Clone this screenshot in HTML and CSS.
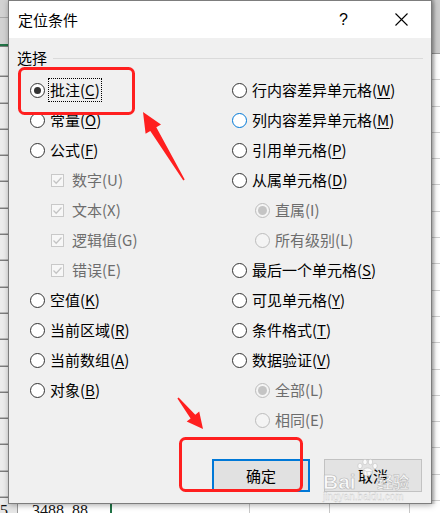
FILE: index.html
```html
<!DOCTYPE html>
<html lang="zh-CN">
<head>
<meta charset="utf-8">
<title>定位条件</title>
<link rel="stylesheet" href="styles.css">
</head>
<body>
<div class="sheet">
  <div class="lstrip"></div>
  <div class="mid"></div>
  <div class="rstrip"></div>
  <div class="bottom-row">
    <span class="cell c0">5</span>
    <span class="cell c1">3488. 88</span>
    <span class="cell c2"></span>
    <span class="cell c3"></span>
    <span class="cell c4"></span>
    <span class="cell c5"></span>
  </div>
</div>

<div class="dialog">
  <div class="titlebar">
    <span class="title">定位条件</span>
    <span class="help">?</span>
    <span class="close"><svg width="13" height="13" viewBox="0 0 13 13"><path d="M0.5 0.5L12.5 12.5M12.5 0.5L0.5 12.5" stroke="#000" stroke-width="1.1" fill="none"/></svg></span>
  </div>
  <div class="body">
    <div class="group-label"><span>选择</span><span class="rule"></span></div>
    <div class="options">
      <div class="col">
        <div class="opt"><span class="radio checked"></span><span class="focus">批注(<u>C</u>)</span></div>
        <div class="opt"><span class="radio"></span><span>常量(<u>O</u>)</span></div>
        <div class="opt"><span class="radio"></span><span>公式(<u>F</u>)</span></div>
        <div class="opt sub dis"><span class="check"><svg width="11" height="11" viewBox="0 0 11 11"><path d="M1.5 5.5L4.2 8.2L9.5 2.5" stroke="#c4c4c4" stroke-width="1.3" fill="none"/></svg></span><span>数字(U)</span></div>
        <div class="opt sub dis"><span class="check"><svg width="11" height="11" viewBox="0 0 11 11"><path d="M1.5 5.5L4.2 8.2L9.5 2.5" stroke="#c4c4c4" stroke-width="1.3" fill="none"/></svg></span><span>文本(X)</span></div>
        <div class="opt sub dis"><span class="check"><svg width="11" height="11" viewBox="0 0 11 11"><path d="M1.5 5.5L4.2 8.2L9.5 2.5" stroke="#c4c4c4" stroke-width="1.3" fill="none"/></svg></span><span>逻辑值(G)</span></div>
        <div class="opt sub dis"><span class="check"><svg width="11" height="11" viewBox="0 0 11 11"><path d="M1.5 5.5L4.2 8.2L9.5 2.5" stroke="#c4c4c4" stroke-width="1.3" fill="none"/></svg></span><span>错误(E)</span></div>
        <div class="opt"><span class="radio"></span><span>空值(<u>K</u>)</span></div>
        <div class="opt"><span class="radio"></span><span>当前区域(<u>R</u>)</span></div>
        <div class="opt"><span class="radio"></span><span>当前数组(<u>A</u>)</span></div>
        <div class="opt"><span class="radio"></span><span>对象(<u>B</u>)</span></div>
      </div>
      <div class="col">
        <div class="opt"><span class="radio"></span><span>行内容差异单元格(<u>W</u>)</span></div>
        <div class="opt"><span class="radio hover"></span><span>列内容差异单元格(<u>M</u>)</span></div>
        <div class="opt"><span class="radio"></span><span>引用单元格(<u>P</u>)</span></div>
        <div class="opt"><span class="radio"></span><span>从属单元格(<u>D</u>)</span></div>
        <div class="opt sub2 dis"><span class="radio disabled checked"></span><span>直属(I)</span></div>
        <div class="opt sub2 dis"><span class="radio disabled"></span><span>所有级别(L)</span></div>
        <div class="opt"><span class="radio"></span><span>最后一个单元格(<u>S</u>)</span></div>
        <div class="opt"><span class="radio"></span><span>可见单元格(<u>Y</u>)</span></div>
        <div class="opt"><span class="radio"></span><span>条件格式(<u>T</u>)</span></div>
        <div class="opt"><span class="radio"></span><span>数据验证(<u>V</u>)</span></div>
        <div class="opt sub2 dis"><span class="radio disabled checked"></span><span>全部(L)</span></div>
        <div class="opt sub2 dis"><span class="radio disabled"></span><span>相同(E)</span></div>
      </div>
    </div>
    <div class="buttons">
      <button class="btn primary">确定</button>
      <button class="btn">取消</button>
    </div>
  </div>
</div>

<svg class="annot" width="440" height="513" viewBox="0 0 440 513">
  <g class="wm">
    <text x="323" y="489" class="wm-bai">Bai</text>
    <g fill="#ffffff" fill-opacity="0.85" stroke="#b8b8b8" stroke-width="0.5">
      <ellipse cx="360" cy="466" rx="2.2" ry="2.8"/>
      <ellipse cx="365" cy="462" rx="2.2" ry="2.8"/>
      <ellipse cx="370.5" cy="462" rx="2.2" ry="2.8"/>
      <ellipse cx="375" cy="466" rx="2.2" ry="2.8"/>
      <ellipse cx="367.5" cy="472" rx="5" ry="4"/>
    </g>
    <text x="377" y="488" class="wm-jy">经验</text>
    <text x="323" y="500" class="wm-url">jingyan.baidu.com</text>
  </g>
  <rect x="19.5" y="68.5" width="114" height="45" rx="5" fill="none" stroke="#ff1f1f" stroke-width="3"/>
  <rect x="180.5" y="438.5" width="121" height="52" rx="5" fill="none" stroke="#ff1f1f" stroke-width="3"/>
  <polygon fill="#ff1f1f" points="143,112 161,124.5 156.3,127.3 184.7,179.6 183.3,180.4 150.3,130.9 145.6,133.7"/>
  <polygon fill="#ff1f1f" points="203,429 186.7,421.6 190.6,418.4 177.4,398.5 178.6,397.5 195.3,414.7 199.2,411.5"/>
</svg>
</body>
</html>
```

FILE: styles.css
```css
html, body {
  margin: 0;
  padding: 0;
}
body {
  width: 440px;
  height: 513px;
  overflow: hidden;
  position: relative;
  background: #ffffff;
  font-family: "Noto Sans CJK SC", "Noto Sans", sans-serif;
}

/* background spreadsheet */
.sheet {
  display: grid;
  grid-template-columns: 8px 1fr 8px;
  grid-template-rows: 504px 1fr;
  height: 513px;
}
.lstrip {
  background:
    linear-gradient(#217346, #217346) 0 44px / 100% 2px no-repeat,
    linear-gradient(#a8a8a8, #a8a8a8) 0 17px / 100% 1px no-repeat,
    linear-gradient(#d2d2d2, #d2d2d2) 0 0 / 100% 44px no-repeat,
    repeating-linear-gradient(to bottom, transparent 0 25.3px, #4a4a4a 25.3px 26.3px) 0 50.7px / 100% 100%,
    #ececec;
}
.mid {
  background: #f0f0f0;
}
.rstrip {
  background:
    linear-gradient(to right, rgba(0,0,0,0.18), rgba(0,0,0,0)) 0 0 / 4px 100% no-repeat,
    linear-gradient(#9a9a9a, #9a9a9a) 0 53px / 100% 1px no-repeat,
    linear-gradient(#cdcdcd, #cdcdcd) 0 0 / 100% 53px no-repeat,
    repeating-linear-gradient(to bottom, transparent 0 25.3px, #cfcfcf 25.3px 26.3px) 0 54px / 100% 100%,
    #ffffff;
}
.bottom-row {
  grid-column: 1 / 4;
  display: flex;
  background: #ffffff;
  font-family: "Liberation Serif", serif;
  font-size: 16px;
  line-height: 14px;
  color: #111;
  overflow: hidden;
}
.cell {
  box-sizing: border-box;
  border-right: 1px solid #c8c8c8;
  height: 9px;
  white-space: pre;
}
.c0 { width: 18px; background: #e6e6e6; border-right-color: #9a9a9a; }
.c1 { width: 94px; padding-left: 14px; border-right: 2px solid #217346; }
.c2 { width: 138px; }
.c3 { width: 80px; }
.c4 { width: 80px; }
.c5 { flex: 1; border-right: none; }

/* dialog window */
.dialog {
  position: absolute;
  left: 8px;
  top: 0;
  width: 422px;
  height: 502px;
  border: 1px solid #7d7d7d;
  background: #f0f0f0;
  box-shadow: 1px 1px 6px rgba(0, 0, 0, 0.35);
  display: flex;
  flex-direction: column;
  font-size: 15px;
  color: #000;
}
.titlebar {
  height: 37px;
  flex: none;
  background: #ffffff;
  display: flex;
  align-items: center;
  padding: 0 7px 0 9px;
}
.title {
  flex: 1;
  line-height: 20px;
}
.help {
  width: 20px;
  text-align: center;
  margin-right: 24.5px;
  font-family: "Liberation Sans", sans-serif;
  font-size: 16px;
  line-height: 20px;
}
.close {
  width: 46px;
  height: 37px;
  display: flex;
  align-items: center;
  justify-content: center;
}
.close svg { display: block; }

.body {
  flex: 1;
  padding: 11px 9px 0 8px;
  display: flex;
  flex-direction: column;
}
.group-label {
  display: flex;
  align-items: center;
  height: 18px;
  line-height: 18px;
}
.rule {
  flex: 1;
  height: 1px;
  background: #dadada;
  margin-left: 6px;
  margin-right: -1px;
}

.options {
  margin-top: 8px;
  padding-left: 13px;
  display: grid;
  grid-template-columns: 202px 1fr;
}
.opt {
  height: 30px;
  display: flex;
  align-items: center;
  line-height: 20px;
  white-space: nowrap;
}
.opt u {
  text-decoration-thickness: 1px;
  text-underline-offset: 2px;
}
.opt.dis {
  color: #6d6d6d;
}
.sub { padding-left: 21px; }
.sub2 { padding-left: 23px; }

.radio {
  flex: none;
  width: 15px;
  height: 15px;
  box-sizing: border-box;
  border: 1px solid #333333;
  border-radius: 50%;
  background: #ffffff;
  margin-right: 5px;
  display: flex;
  align-items: center;
  justify-content: center;
}
.radio.checked::after {
  content: "";
  width: 7px;
  height: 7px;
  border-radius: 50%;
  background: #333333;
}
.radio.hover {
  border-color: #0078d7;
}
.radio.disabled {
  border-color: #bcbcbc;
  background: #f4f4f4;
}
.radio.disabled.checked::after {
  width: 9px;
  height: 9px;
  background: #c4c4c4;
}
.check {
  flex: none;
  width: 13px;
  height: 13px;
  box-sizing: border-box;
  border: 1px solid #c9c9c9;
  background: #f7f7f7;
  margin-right: 8px;
  display: flex;
  align-items: center;
  justify-content: center;
}
.check svg { display: block; }

.focus {
  outline: 1px dotted #000;
  padding: 1px 1px;
  margin: -1px -1px;
}

.buttons {
  margin-top: 24px;
  display: flex;
  justify-content: flex-end;
  gap: 14px;
}
.btn {
  width: 98px;
  height: 33px;
  box-sizing: border-box;
  border: 1px solid #c2c2c2;
  background: #e3e3e3;
  font-family: "Noto Sans CJK SC", sans-serif;
  font-size: 15px;
  color: #000;
  padding: 0;
  line-height: 20px;
}
.btn.primary {
  border: 2px solid #0078d7;
  background: #e1e1e1;
}

/* annotation overlay */
.annot {
  position: absolute;
  left: 0;
  top: 0;
  pointer-events: none;
}
.wm-bai {
  font-family: "Liberation Sans", sans-serif;
  font-weight: bold;
  font-size: 21px;
  fill: #ffffff;
  fill-opacity: 0.85;
  stroke: #b5b5b5;
  stroke-width: 0.6;
}
.wm-jy {
  font-family: "Noto Sans CJK SC", sans-serif;
  font-weight: bold;
  font-size: 16px;
  fill: #ffffff;
  fill-opacity: 0.8;
  stroke: #b5b5b5;
  stroke-width: 0.5;
}
.wm-url {
  font-family: "Liberation Sans", sans-serif;
  font-size: 10px;
  fill: #ffffff;
  fill-opacity: 0.9;
  stroke: #c4c4c4;
  stroke-width: 0.3;
}
```
